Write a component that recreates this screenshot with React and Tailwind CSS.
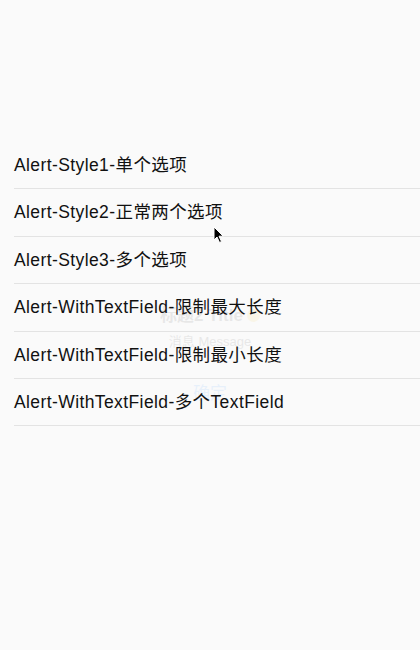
const items = [
  'Alert-Style1-单个选项',
  'Alert-Style2-正常两个选项',
  'Alert-Style3-多个选项',
  'Alert-WithTextField-限制最大长度',
  'Alert-WithTextField-限制最小长度',
  'Alert-WithTextField-多个TextField',
];

function Cursor() {
  return (
    <svg className="absolute left-[213px] top-[226px]" width="12" height="18" viewBox="0 0 12 18">
      <path d="M1 1 L1 14 L4 11 L6.5 16.5 L8.5 15.5 L6 10.2 L10.2 10.2 Z" fill="#000" stroke="#fff" strokeWidth="1" strokeLinejoin="round" />
    </svg>
  );
}

export default function App() {
  return (
    <div
      className="relative h-[650px] w-[420px] overflow-hidden bg-[#fafafa]"
      style={{ fontFamily: '"Liberation Sans", "Noto Sans CJK SC", sans-serif' }}
    >
      {/* fading alert behind the list */}
      <div className="absolute left-0 right-0 top-[303px] flex flex-col items-center opacity-[0.07]">
        <div className="flex items-center gap-1 text-[17px] font-semibold text-black">
          标题2 Title <span className="inline-block h-[13px] w-[13px] rounded-full bg-[#f5b800]" />
        </div>
        <div className="mt-[3px] text-[13px] text-black">消息 Message</div>
        <div className="mt-[30px] text-[17px] text-[#007aff]">确定</div>
      </div>

      <div className="relative pt-[142px]">
        {items.map((t) => (
          <div key={t} className="ml-[14px] flex h-[47.4px] items-center border-b border-[#e3e3e3] text-[17.5px] tracking-[0.4px] text-[#111]">
            {t}
          </div>
        ))}
      </div>
      <Cursor />
    </div>
  );
}
